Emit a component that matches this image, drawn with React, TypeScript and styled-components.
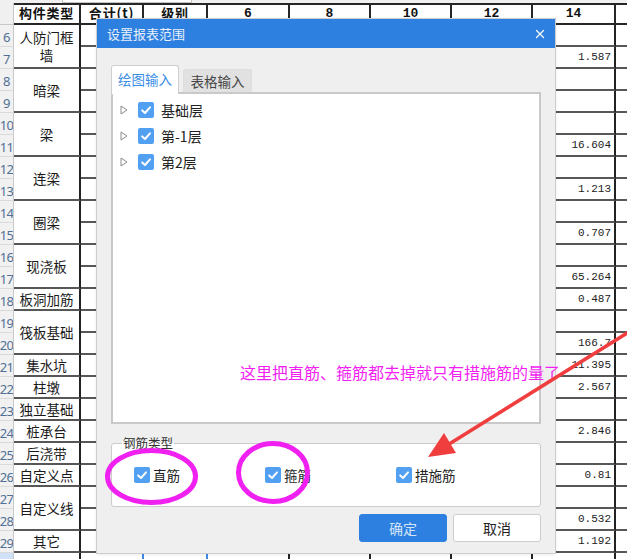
import React from "react";
import styled, { createGlobalStyle } from "styled-components";
import { X } from "lucide-react";

const GlobalStyle = createGlobalStyle`
  html, body {
    margin: 0;
    padding: 0;
    background: #fff;
  }
  body {
    font-family: "Noto Sans CJK SC", "Noto Sans", sans-serif;
    overflow: hidden;
  }
  * {
    box-sizing: border-box;
  }
`;

const Screen = styled.div`
  position: relative;
  width: 627px;
  height: 559px;
  overflow: hidden;
  background: #fff;
`;

const TopStrip = styled.div`
  height: 3px;
  background: #f0f0f0;
  padding-left: 62px;
`;

const TopBox = styled.div`
  width: 130px;
  height: 3px;
  background: #fff;
  border: 1px solid #c4c4c4;
  border-top: none;
`;

const Sheet = styled.div`
  display: grid;
  grid-template-columns: 14px 67px 63px 64px 82px 81px 81px 81px 83px 40px;
  grid-template-rows: 22px repeat(25, 22px);
`;

const Corner = styled.div`
  background: #f0f0f0;
  border-bottom: 1px solid #c8c8c8;
  border-right: 1px solid #c8c8c8;
`;

const HeadCell = styled.div<{ $mono?: boolean }>`
  display: flex;
  align-items: flex-start;
  justify-content: center;
  background: #fff;
  border-top: 2px solid #262626;
  border-bottom: 2px solid #262626;
  border-right: 2px solid #262626;
  font-family: ${(p) =>
    p.$mono ? '"Liberation Mono", monospace' : '"Noto Sans CJK SC", sans-serif'};
  font-size: 13px;
  line-height: 15px;
  padding-top: ${(p) => (p.$mono ? "1px" : "0")};
  font-weight: bold;
  letter-spacing: ${(p) => (p.$mono ? "0" : "0.8px")};
  color: #111;
  white-space: nowrap;
`;

const RowNum = styled.div<{ $active?: boolean }>`
  display: flex;
  align-items: center;
  justify-content: center;
  padding-top: 3px;
  background: ${(p) => (p.$active ? "#cfe1f6" : "#f1f1f1")};
  border-bottom: 1px solid #dadada;
  border-right: 1px solid #c8c8c8;
  font-family: "Noto Sans", sans-serif;
  font-size: 13px;
  letter-spacing: -0.6px;
  color: #4f7096;
  overflow: hidden;
`;

const LabelCell = styled.div<{ $span: number }>`
  grid-row: span ${(p) => p.$span};
  display: flex;
  align-items: center;
  justify-content: center;
  text-align: center;
  padding: 0 1px;
  background: #fff;
  border-bottom: 2px solid #575757;
  border-right: 2px solid #222;
  font-size: 13.5px;
  line-height: 18px;
  color: #1a1a1a;
`;

const DataCell = styled.div<{ $edge?: string }>`
  display: flex;
  align-items: center;
  justify-content: flex-end;
  padding-right: 3px;
  background: #fff;
  border-bottom: 2px solid #575757;
  border-right: 2px solid ${(p) => p.$edge || "#222"};
  font-family: "Liberation Mono", monospace;
  font-size: 11px;
  color: #222;
  white-space: nowrap;
`;

/* ---------- dialog ---------- */

const Dialog = styled.div`
  position: absolute;
  left: 97px;
  top: 19px;
  width: 458px;
  height: 534px;
  display: flex;
  flex-direction: column;
  background: #efefef;
  box-shadow: 0 0 0 1px #cdcdcd, 0 1px 4px rgba(0, 0, 0, 0.12);
`;

const TitleBar = styled.div`
  height: 29px;
  flex-shrink: 0;
  display: flex;
  align-items: center;
  justify-content: space-between;
  padding: 0 8px 0 10px;
  background: #2e80e0;
  color: #e8f0fb;
  font-size: 13px;
`;

const Body = styled.div`
  display: flex;
  flex-direction: column;
  padding: 17px 14px 11px;
`;

const TabBar = styled.div`
  height: 27px;
  display: flex;
  align-items: flex-end;
  gap: 4px;
`;

const Tab = styled.div<{ $active?: boolean }>`
  position: relative;
  width: ${(p) => (p.$active ? "68px" : "69px")};
  height: ${(p) => (p.$active ? "29px" : "23px")};
  margin-bottom: ${(p) => (p.$active ? "-2px" : "0")};
  display: flex;
  align-items: center;
  justify-content: center;
  padding-bottom: ${(p) => (p.$active ? "2px" : "0")};
  background: ${(p) => (p.$active ? "#fff" : "#e1e1e1")};
  border: 1px solid ${(p) => (p.$active ? "#cfcfcf" : "#dedede")};
  border-bottom: none;
  border-radius: 3px 3px 0 0;
  color: ${(p) => (p.$active ? "#3a8de6" : "#444")};
  font-size: 13.5px;
`;

const TreePanel = styled.div`
  height: 332px;
  padding: 3px 0 0 7px;
  background: #fff;
  border: 2px solid #c9c9c9;
`;

const TreeItem = styled.div`
  height: 26px;
  display: flex;
  align-items: center;
  font-size: 14px;
  color: #222;
`;

const Caret = styled.svg`
  width: 8px;
  height: 10px;
  margin-right: 10px;
`;

const Box = styled.span<{ $gap: number }>`
  width: 16px;
  height: 16px;
  flex-shrink: 0;
  display: inline-flex;
  align-items: center;
  justify-content: center;
  margin-right: ${(p) => p.$gap}px;
  border-radius: 2px;
  background: #52a0f2;
`;

const GroupFrame = styled.div`
  position: relative;
  height: 64px;
  margin-top: 19px;
  display: grid;
  grid-template-columns: 131px 131px 131px;
  align-items: center;
  padding-left: 22px;
  background: #fff;
  border: 1px solid #cbcbcb;
  border-radius: 3px;
`;

const GroupLegend = styled.span`
  position: absolute;
  left: 10px;
  top: -8px;
  padding: 0 1px;
  background: linear-gradient(#efefef 50%, #fff 50%);
  font-size: 12.5px;
  line-height: 14px;
  color: #333;
`;

const CheckItem = styled.label`
  display: flex;
  align-items: center;
  font-size: 13.5px;
  color: #222;
`;

const ButtonRow = styled.div`
  margin-top: 7px;
  display: flex;
  justify-content: flex-end;
  gap: 6px;
`;

const Button = styled.button<{ $primary?: boolean }>`
  width: 88px;
  height: 28px;
  padding: 0;
  border-radius: 3px;
  border: 1px solid ${(p) => (p.$primary ? "#2e80e0" : "#cdcdcd")};
  background: ${(p) => (p.$primary ? "#2e80e0" : "#fff")};
  color: ${(p) => (p.$primary ? "#d5e5f8" : "#222")};
  font-family: "Noto Sans CJK SC", sans-serif;
  font-size: 14px;
`;

/* ---------- annotations ---------- */

const Marks = styled.svg`
  position: absolute;
  left: 0;
  top: 0;
  pointer-events: none;
`;

const Note = styled.div`
  position: absolute;
  left: 240px;
  top: 363px;
  font-size: 16px;
  line-height: 18px;
  color: #f21ef2;
  white-space: nowrap;
`;

const labels = [
  { text: "人防门框墙", span: 2 },
  { text: "暗梁", span: 2 },
  { text: "梁", span: 2 },
  { text: "连梁", span: 2 },
  { text: "圈梁", span: 2 },
  { text: "现浇板", span: 2 },
  { text: "板洞加筋", span: 1 },
  { text: "筏板基础", span: 2 },
  { text: "集水坑", span: 1 },
  { text: "柱墩", span: 1 },
  { text: "独立基础", span: 1 },
  { text: "桩承台", span: 1 },
  { text: "后浇带", span: 1 },
  { text: "自定义点", span: 1 },
  { text: "自定义线", span: 2 },
  { text: "其它", span: 1 },
];

const col14: Record<number, string> = {
  7: "1.587",
  11: "16.604",
  13: "1.213",
  15: "0.707",
  17: "65.264",
  18: "0.487",
  20: "166.7",
  21: "11.395",
  22: "2.567",
  24: "2.846",
  26: "0.81",
  28: "0.532",
  29: "1.192",
};

const headers = ["构件类型", "合计(t)", "级别", "6", "8", "10", "12", "14", ""];

const Check = ({ gap }: { gap: number }) => (
  <Box $gap={gap}>
    <svg width="16" height="16" viewBox="0 0 16 16">
      <path
        d="M4.2 8.4 L7 11 L12 5.4"
        fill="none"
        stroke="#fff"
        strokeWidth="2"
        strokeLinecap="round"
        strokeLinejoin="round"
      />
    </svg>
  </Box>
);

const renderRows = () => {
  const out: React.ReactNode[] = [];
  let row = 6;
  labels.forEach((l) => {
    for (let i = 0; i < l.span; i++) {
      const r = row + i;
      out.push(<RowNum key={"n" + r}>{r}</RowNum>);
      if (i === 0)
        out.push(
          <LabelCell key={"l" + r} $span={l.span}>
            {l.text}
          </LabelCell>
        );
      for (let c = 2; c <= 9; c++) {
        out.push(<DataCell key={`d${r}-${c}`}>{c === 8 ? col14[r] || "" : ""}</DataCell>);
      }
    }
    row += l.span;
  });
  return out;
};

const lastRow = ["93.983", "", "11.710", "1.447", "", "", "", ""];

export default function App() {
  return (
    <Screen>
      <GlobalStyle />
      <TopStrip>
        <TopBox />
      </TopStrip>
      <Sheet>
        <Corner />
        {headers.map((h, i) => (
          <HeadCell key={i} $mono={/^\d/.test(h)}>
            {h}
          </HeadCell>
        ))}
        {renderRows()}
        <RowNum $active />
        <LabelCell $span={1} />
        {lastRow.map((v, i) => (
          <DataCell key={"z" + i} $edge={i < 2 ? "#3b8be6" : undefined}>
            {v}
          </DataCell>
        ))}
      </Sheet>

      <Dialog>
        <TitleBar>
          <span>设置报表范围</span>
          <X size={14} strokeWidth={2.4} color="#f2f6fc" />
        </TitleBar>
        <Body>
          <TabBar>
            <Tab $active>绘图输入</Tab>
            <Tab>表格输入</Tab>
          </TabBar>
          <TreePanel>
            {["基础层", "第-1层", "第2层"].map((t) => (
              <TreeItem key={t}>
                <Caret viewBox="0 0 8 10">
                  <polygon
                    points="1,1 7,5 1,9"
                    fill="none"
                    stroke="#8c8c8c"
                    strokeWidth="1"
                    strokeLinejoin="round"
                  />
                </Caret>
                <Check gap={7} />
                {t}
              </TreeItem>
            ))}
          </TreePanel>
          <GroupFrame>
            <GroupLegend>钢筋类型</GroupLegend>
            <CheckItem>
              <Check gap={3} />
              直筋
            </CheckItem>
            <CheckItem>
              <Check gap={3} />
              箍筋
            </CheckItem>
            <CheckItem>
              <Check gap={3} />
              措施筋
            </CheckItem>
          </GroupFrame>
          <ButtonRow>
            <Button $primary>确定</Button>
            <Button>取消</Button>
          </ButtonRow>
        </Body>
      </Dialog>

      <Note>这里把直筋、箍筋都去掉就只有措施筋的量了</Note>
      <Marks width="627" height="559" viewBox="0 0 627 559">
        <ellipse
          cx="151.5"
          cy="476.5"
          rx="44"
          ry="26"
          fill="none"
          stroke="#f020f0"
          strokeWidth="5"
        />
        <ellipse
          cx="273"
          cy="472.5"
          rx="34.5"
          ry="29"
          fill="none"
          stroke="#f020f0"
          strokeWidth="5"
        />
        <line
          x1="640"
          y1="325"
          x2="446"
          y2="446"
          stroke="#f03e3e"
          strokeWidth="3.5"
        />
        <polygon points="428,457 456,453 444,433" fill="#f03e3e" />
      </Marks>
    </Screen>
  );
}
